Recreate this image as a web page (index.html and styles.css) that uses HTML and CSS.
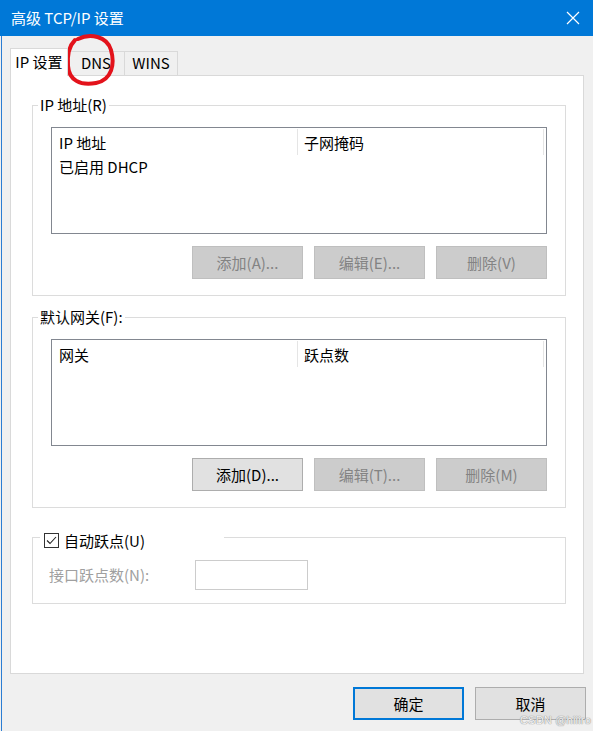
FILE: index.html
```html
<!DOCTYPE html>
<html lang="zh-CN">
<head>
<meta charset="utf-8">
<title>高级 TCP/IP 设置</title>
<link rel="stylesheet" href="styles.css">
</head>
<body>
<div class="titlebar">
  <span class="title">高级 TCP/IP 设置</span>
  <svg class="close" width="14" height="14" viewBox="0 0 14 14"><path d="M1 1 L13 13 M13 1 L1 13" stroke="#fff" stroke-width="1.2" fill="none"/></svg>
</div>
<div class="client">
  <div class="tabs">
    <div class="tab active t1">IP 设置</div>
    <div class="tab t2">DNS</div>
    <div class="tab t3">WINS</div>
  </div>
  <div class="panel">
    <fieldset class="group g1">
      <legend>IP 地址(R)</legend>
      <div class="gbody">
        <div class="list">
          <div class="list-head"><div class="col c1">IP 地址</div><div class="col c2">子网掩码</div></div>
          <div class="list-row"><div class="col c1">已启用 DHCP</div></div>
        </div>
        <div class="btnrow">
          <button class="btn" disabled>添加(A)...</button>
          <button class="btn" disabled>编辑(E)...</button>
          <button class="btn" disabled>删除(V)</button>
        </div>
      </div>
    </fieldset>
    <fieldset class="group g2">
      <legend>默认网关(F):</legend>
      <div class="gbody">
        <div class="list">
          <div class="list-head"><div class="col c1">网关</div><div class="col c2">跃点数</div></div>
        </div>
        <div class="btnrow">
          <button class="btn">添加(D)...</button>
          <button class="btn" disabled>编辑(T)...</button>
          <button class="btn" disabled>删除(M)</button>
        </div>
      </div>
    </fieldset>
    <fieldset class="group g3">
      <legend class="chk-legend">
        <span class="checkbox"><svg width="13" height="13" viewBox="0 0 13 13"><path d="M2 6.5 L5 9.5 L11 3" stroke="#222" stroke-width="1.1" fill="none"/></svg></span>
        <span>自动跃点(U)</span>
      </legend>
      <div class="gbody row3">
        <span class="dlabel">接口跃点数(N):</span>
        <span class="dinput"></span>
      </div>
    </fieldset>
  </div>
  <div class="footer">
    <button class="btn default">确定</button>
    <button class="btn">取消</button>
  </div>
</div>
<svg class="mark" width="64" height="62" viewBox="0 0 64 62"><path d="M18 8 C30 2, 47 5, 51 19 C55 33, 52 49, 36 52 C20 55, 9 49, 8 35 C7 23, 10 14, 15 9" stroke="#e3121b" stroke-width="4" fill="none" stroke-linecap="round"/></svg>
<div class="watermark">CSDN @hiiiro</div>
</body>
</html>
```
FILE: styles.css
```css
* { box-sizing: border-box; }
html, body { margin: 0; padding: 0; }
body {
  width: 593px;
  height: 731px;
  overflow: hidden;
  background: #f0f0f0;
  font-family: "Noto Sans CJK SC", "Noto Sans", sans-serif;
  font-size: 15px;
  color: #000;
  position: relative;
}
.titlebar {
  height: 36px;
  background: #0078d7;
  color: #fff;
  display: flex;
  align-items: center;
  justify-content: space-between;
  padding: 0 7px 0 11px;
}
.title { font-size: 15px; line-height: 20px; }
.close { margin-right: 6px; }
.client {
  margin-left: 1px;
  border-left: 1px solid #2b7dd3;
  padding: 12px 9px 0 8px;
  height: 695px;
}
.tabs {
  display: flex;
  align-items: flex-end;
  height: 27px;
}
.tab {
  height: 24px;
  line-height: 22px;
  text-align: center;
  border: 1px solid #d9d9d9;
  border-bottom: none;
  background: #f0f0f0;
}
.tab.active {
  height: 28px;
  line-height: 26px;
  background: #fff;
  position: relative;
  z-index: 1;
  margin-bottom: -1px;
  padding-bottom: 1px;
}
.t1 { width: 58px; }
.t2 { width: 58px; margin-left: -1px; }
.t3 { width: 54px; margin-left: -1px; }
.panel {
  width: 574px;
  height: 599px;
  background: #fff;
  border: 1px solid #d9d9d9;
  padding: 19px 0 0 21px;
}
.group {
  width: 534px;
  margin: 0;
  padding: 0;
  border: 1px solid #dcdcdc;
  min-inline-size: 0;
}
.group legend {
  margin-left: 5px;
  padding: 0 2px;
  line-height: 20px;
  height: 20px;
}
.gbody { padding: 12px 0 16px 18px; }
.g2 { margin-top: 11px; }
.g2 .gbody { padding-top: 12px; }
.list {
  width: 496px;
  height: 107px;
  border: 1px solid #828790;
  background: #fff;
}
.list-head {
  display: flex;
  height: 27px;
}
.list-head .col {
  width: 246px;
  border-right: 1px solid #e5e5e5;
  padding-top: 4px;
  line-height: 20px;
  margin-top: 1px;
}
.list-head .c1 { padding-left: 7px; }
.list-head .c2 { padding-left: 6px; }
.list-row { line-height: 20px; padding: 2px 0 0 7px; }
.btnrow {
  width: 496px;
  display: flex;
  justify-content: flex-end;
  gap: 11px;
  margin-top: 12px;
}
.btn {
  width: 111px;
  height: 33px;
  font-family: inherit;
  font-size: 15px;
  line-height: 20px;
  padding: 0;
  background: #e1e1e1;
  border: 1px solid #adadad;
  color: #000;
}
.btn:disabled {
  background: #cccccc;
  border-color: #bfbfbf;
  color: #838383;
}
.btn.default { border: 2px solid #0078d7; }
.g3 { margin-top: 15px; }
.chk-legend {
  margin-left: 7px !important;
  width: 184px;
  height: 28px !important;
  padding: 7px 0 0 4px !important;
  display: flex;
  align-items: center;
  gap: 5px;
}
.checkbox {
  width: 15px;
  height: 15px;
  border: 1px solid #333;
  display: flex;
  align-items: center;
  justify-content: center;
  background: #fff;
}
.row3 {
  display: flex;
  align-items: center;
  padding: 9px 0 13px 16px;
}
.dlabel { width: 146px; color: #a0a0a0; line-height: 20px; }
.dinput {
  width: 113px;
  height: 30px;
  border: 1px solid #cccccc;
  background: #fff;
}
.footer {
  display: flex;
  justify-content: flex-end;
  gap: 11px;
  margin-top: 13px;
  margin-right: -2px;
}
.mark {
  position: absolute;
  left: 60px;
  top: 31px;
}
.watermark {
  position: absolute;
  right: 2px;
  bottom: 5px;
  font-family: "Liberation Sans", sans-serif;
  font-size: 11px;
  color: #f4f4f4;
  text-shadow: 0 0 1px #8a8a8a, 0 0 1px #8a8a8a;
  letter-spacing: 0.2px;
}
```
